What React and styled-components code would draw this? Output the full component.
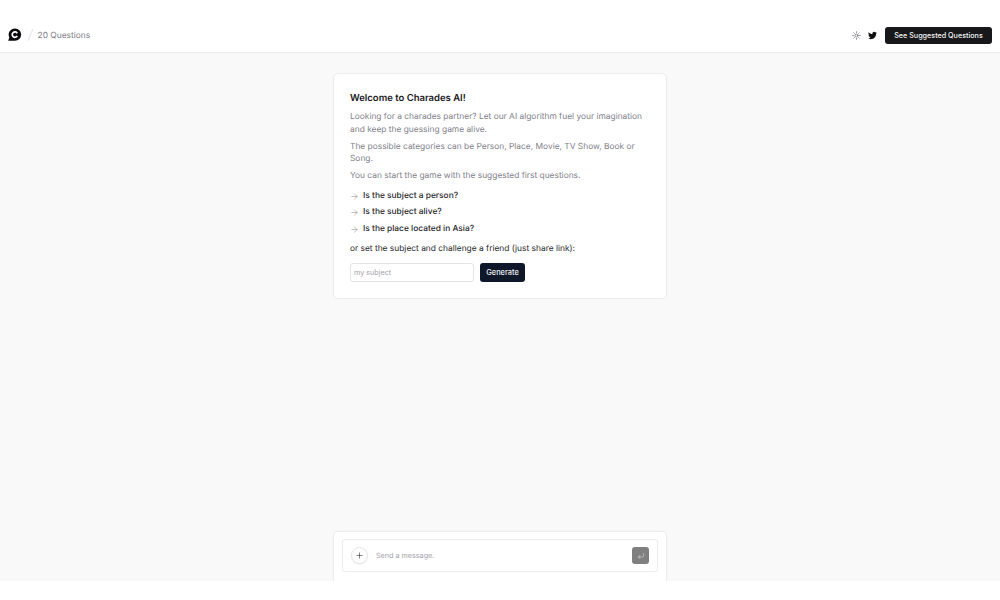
import React from 'react'
import styled, { createGlobalStyle } from 'styled-components'
import { ArrowRight, Plus, Sun, CornerDownLeft } from 'lucide-react'
import { FaTwitter } from 'react-icons/fa'

const GlobalStyle = createGlobalStyle`
  html, body {
    margin: 0;
    background: #fff;
    font-family: Inter, "Liberation Sans", sans-serif;
    color: #18181b;
    text-rendering: geometricPrecision;
  }
  * { box-sizing: border-box; }
`

const Page = styled.div`
  display: flex;
  flex-direction: column;
  height: 600px;
  overflow: hidden;
`

const Header = styled.header`
  display: flex;
  align-items: center;
  justify-content: space-between;
  height: 53px;
  padding: 18px 8px 0;
  background: #fff;
  border-bottom: 1px solid #ececee;
`

const Group = styled.div`
  display: flex;
  align-items: center;
`

const Slash = styled.span`
  margin: 0 5px 0 6px;
  color: #dcdce0;
  font-size: 13px;
  font-weight: 300;
  font-style: italic;
`

const Crumb = styled.span`
  margin-top: 1px;
  color: #7c7c85;
  font-size: 8.4px;
`

const IconSlot = styled.span`
  display: flex;
  margin-right: ${p => p.$gap}px;
  color: ${p => p.$color};
`

const DarkButton = styled.button`
  width: ${p => p.$width}px;
  height: ${p => p.$height}px;
  padding: 0;
  border: 0;
  border-radius: 3px;
  background: ${p => p.$bg};
  color: #f4f4f5;
  font-family: inherit;
  font-size: ${p => p.$size}px;
  font-weight: 500;
`

const Main = styled.main`
  flex: 1;
  display: flex;
  flex-direction: column;
  align-items: center;
  justify-content: space-between;
  padding-top: 20px;
  background: #f9f9f9;
`

const Card = styled.section`
  width: 334px;
  padding: 18px 16px 16px;
  background: #fff;
  border: 1px solid #ececee;
  border-radius: 5px;
`

const Title = styled.h1`
  margin: 0 0 5px;
  font-size: 9.5px;
  line-height: 14px;
  font-weight: 600;
`

const Muted = styled.p`
  margin: 0 0 4.4px;
  color: #80808a;
  font-size: 8.4px;
  line-height: 12.6px;
`

const QuestionList = styled.div`
  display: flex;
  flex-direction: column;
  gap: 4.1px;
  margin-top: 7px;
`

const Question = styled.div`
  display: flex;
  align-items: center;
  gap: 4px;
  font-size: 8.4px;
  line-height: 12.6px;
  font-weight: 500;
  color: #27272a;
  svg { color: #8a8a92; }
`

const Challenge = styled.p`
  margin: 7px 0 8px;
  font-size: 8.4px;
  line-height: 12.6px;
  color: #27272a;
`

const SubjectForm = styled.div`
  display: flex;
  gap: 6px;
`

const SubjectInput = styled.input`
  width: 124px;
  height: 19px;
  padding: 0 3px;
  border: 1px solid #e4e4e7;
  border-radius: 3px;
  font-family: inherit;
  font-size: 7.2px;
  &::placeholder { color: #a1a1aa; }
`

const ChatPanel = styled.section`
  width: 334px;
  height: 50px;
  padding: 7px 8px 0;
  background: #fff;
  border: 1px solid #ececee;
  border-bottom-width: 0;
  border-radius: 5px 5px 0 0;
  box-shadow: 0 0 4px rgba(0, 0, 0, 0.02);
`

const ChatBox = styled.div`
  display: flex;
  align-items: center;
  height: 33px;
  padding: 0 8px;
  border: 1px solid #ececee;
  border-radius: 3px;
`

const RoundButton = styled.span`
  display: flex;
  align-items: center;
  justify-content: center;
  width: 17px;
  height: 17px;
  border: 1px solid #e4e4e7;
  border-radius: 50%;
  box-shadow: 0 1px 1px rgba(0, 0, 0, 0.05);
  color: #27272a;
`

const Placeholder = styled.span`
  flex: 1;
  margin-left: 8px;
  color: #a1a1aa;
  font-size: 7.2px;
`

const SendButton = styled.span`
  display: flex;
  align-items: center;
  justify-content: center;
  width: 17px;
  height: 17px;
  border-radius: 3px;
  background: #7f7f7f;
  color: #e8e8e8;
`

const Bottom = styled.div`
  height: 19px;
  background: #fff;
`

function Logo() {
  return (
    <svg width="14" height="14" viewBox="0 0 14 14">
      <path d="M7 .4a6.2 6.2 0 0 1 0 12.4H.2l1.1-3.4A6.2 6.2 0 0 1 7 .4z" fill="#0c0c0e" />
      <path d="M9.2 5.2A2.7 2.7 0 1 0 9.2 8" fill="none" stroke="#fff" strokeWidth="1.7" />
    </svg>
  )
}

const questions = ['Is the subject a person?', 'Is the subject alive?', 'Is the place located in Asia?']

export default function App() {
  return (
    <Page>
      <GlobalStyle />
      <Header>
        <Group>
          <Logo />
          <Slash>/</Slash>
          <Crumb>20 Questions</Crumb>
        </Group>
        <Group>
          <IconSlot $gap={7} $color="#63636b"><Sun size={9} /></IconSlot>
          <IconSlot $gap={8} $color="#111"><FaTwitter size={9} /></IconSlot>
          <DarkButton $width={107} $height={17} $size={7.2} $bg="#18181b">See Suggested Questions</DarkButton>
        </Group>
      </Header>
      <Main>
        <Card>
          <Title>Welcome to Charades AI!</Title>
          <Muted>Looking for a charades partner? Let our AI algorithm fuel your imagination and keep the guessing game alive.</Muted>
          <Muted>The possible categories can be Person, Place, Movie, TV Show, Book or Song.</Muted>
          <Muted>You can start the game with the suggested first questions.</Muted>
          <QuestionList>
            {questions.map(q => (
              <Question key={q}><ArrowRight size={9} strokeWidth={1.5} />{q}</Question>
            ))}
          </QuestionList>
          <Challenge>or set the subject and challenge a friend (just share link):</Challenge>
          <SubjectForm>
            <SubjectInput placeholder="my subject" />
            <DarkButton $width={45} $height={19} $size={7.4} $bg="#0f172a">Generate</DarkButton>
          </SubjectForm>
        </Card>
        <ChatPanel>
          <ChatBox>
            <RoundButton><Plus size={9} strokeWidth={1.5} /></RoundButton>
            <Placeholder>Send a message.</Placeholder>
            <SendButton><CornerDownLeft size={8} strokeWidth={1.5} /></SendButton>
          </ChatBox>
        </ChatPanel>
      </Main>
      <Bottom />
    </Page>
  )
}
